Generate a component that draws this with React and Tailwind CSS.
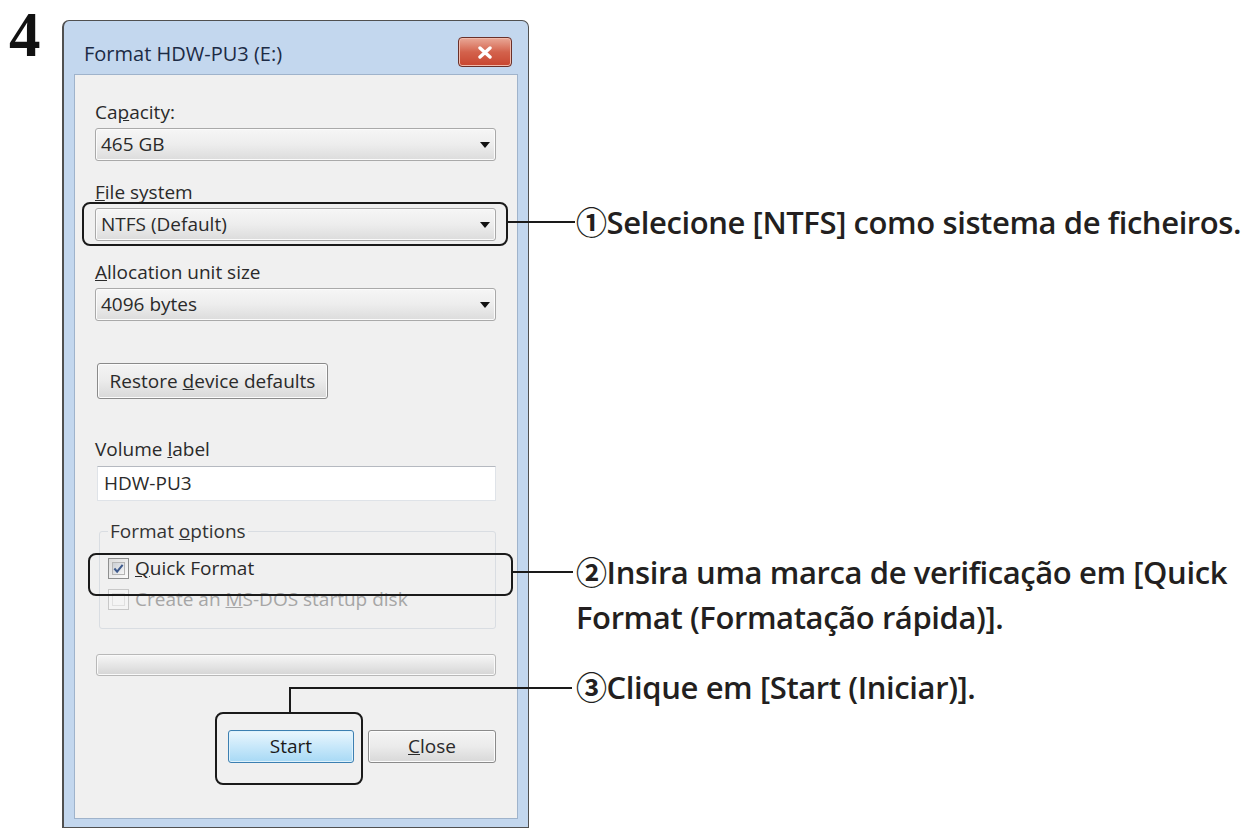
import React from "react";

const Arrow = () => (
  <svg width="10" height="6" viewBox="0 0 10 6">
    <path d="M0 0h10L5 6z" fill="#111" />
  </svg>
);

const Combo = ({ value }) => (
  <div className="h-[33px] w-[401px] flex items-center justify-between pl-[5px] pr-[5px] rounded-[3px] border border-[#a9a9a9] bg-linear-to-b from-[#f6f6f6] via-[#ededed] to-[#dcdcdc] shadow-[inset_0_0_0_1px_#fbfbfb]">
    <span>{value}</span>
    <Arrow />
  </div>
);

const Check = ({ checked, disabled }) => (
  <div
    className={
      "w-[21px] h-[21px] shrink-0 border p-[3px] " +
      (disabled
        ? "border-[#c8c8c8] bg-[#f4f4f4]"
        : "border-[#8e8f8f] bg-linear-to-br from-[#dcdcdc] to-[#fbfbfb]")
    }
  >
    <div
      className={
        "w-full h-full border flex items-center justify-center " +
        (disabled
          ? "border-[#e0e0e0] bg-[#f4f4f4]"
          : "border-[#b5b5b5] bg-linear-to-br from-[#cbcfd5] to-[#f6f6f6]")
      }
    >
      {checked && (
        <svg width="12" height="11" viewBox="0 0 12 11">
          <path d="M1.5 5.5L4.5 9L10.5 1.5" fill="none" stroke="#3e5a8c" strokeWidth="2.2" />
        </svg>
      )}
    </div>
  </div>
);

const Label = ({ children, className = "" }) => (
  <div className={"h-[20px] leading-[20px] " + className}>{children}</div>
);

const Dialog = () => (
  <div className="mt-[20px] w-[467px] h-[808px] flex flex-col rounded-t-[7px] border border-[#505050] border-l-2 bg-[#c3d7ee] font-['Open_Sans',sans-serif] text-[19px] text-[#2a2a2a]">
    {/* title bar */}
    <div className="h-[53px] flex justify-between pl-[20px] pr-[16px]">
      <div className="pt-[21px] text-[20px] leading-[24px] text-[#1c2b45]">Format HDW-PU3 (E:)</div>
      <div className="mt-[16px] w-[54px] h-[30px] rounded-[4px] border border-[#6a3029] bg-linear-to-b from-[#e9a897] via-[#d3624c] to-[#c8452f] shadow-[inset_0_0_0_1px_#f1b9aa] flex items-center justify-center">
        <svg width="16" height="13" viewBox="0 0 16 13">
          <path d="M3 2L13 11M13 2L3 11" stroke="#fff" strokeWidth="3.4" strokeLinecap="round" />
        </svg>
      </div>
    </div>
    {/* client area */}
    <div className="mx-[10px] mb-[8px] flex-1 flex flex-col border border-[#9fb3cb] bg-[#f0f0f0] pl-[20px] pr-[19px] pt-[27px]">
      <Label>
        Ca<span className="underline">p</span>acity:
      </Label>
      <div className="mt-[6px]">
        <Combo value="465 GB" />
      </div>
      <Label className="mt-[21px]">
        <span className="underline">F</span>ile system
      </Label>
      <div className="mt-[6px]">
        <Combo value="NTFS (Default)" />
      </div>
      <Label className="mt-[21px]">
        <span className="underline">A</span>llocation unit size
      </Label>
      <div className="mt-[6px]">
        <Combo value="4096 bytes" />
      </div>
      <div className="mt-[42px] w-[231px] h-[36px] ml-[2px] rounded-[3px] border border-[#8a8a8a] bg-linear-to-b from-[#f4f4f4] via-[#ebebeb] to-[#d8d8d8] shadow-[inset_0_0_0_1px_#fcfcfc] flex items-center justify-center">
        <span>
          Restore <span className="underline">d</span>evice defaults
        </span>
      </div>
      <Label className="mt-[40px]">
        Volume <span className="underline">l</span>abel
      </Label>
      <div className="mt-[7px] ml-[2px] w-[399px] h-[35px] flex items-center pl-[6px] bg-white border border-[#dfe3e8] border-t-[#b5b9c0]">
        HDW-PU3
      </div>
      <fieldset className="mt-[20px] ml-[4px] w-[397px] h-[108px] border border-[#d9dde2] rounded-[3px] pl-[8px] pt-[16px]">
        <legend className="px-[2px] leading-[20px] text-[#333]">
          Format <span className="underline">o</span>ptions
        </legend>
        <div className="flex items-center gap-[6px] h-[22px]">
          <Check checked />
          <span>
            <span className="underline">Q</span>uick Format
          </span>
        </div>
        <div className="mt-[9px] flex items-center gap-[6px] h-[22px] text-[#a6a6a6]">
          <Check disabled />
          <span>
            Create an <span className="underline">M</span>S-DOS startup disk
          </span>
        </div>
      </fieldset>
      <div className="mt-[25px] ml-[1px] w-[400px] h-[22px] rounded-[3px] border border-[#b8b8b8] bg-linear-to-b from-[#f6f6f6] via-[#e6e6e6] to-[#d5d5d5] shadow-[inset_0_0_0_1px_#fafafa]" />
      <div className="mt-[54px] flex justify-end gap-[14px] pr-[2px]">
        <div className="w-[126px] h-[33px] rounded-[3px] border border-[#3c7fb1] bg-linear-to-b from-[#eaf6fd] via-[#c8e8fa] to-[#a7d9f5] shadow-[inset_0_0_0_1px_#dff2fc] flex items-center justify-center text-[#1a1a1a]">
          Start
        </div>
        <div className="w-[128px] h-[33px] rounded-[3px] border border-[#8a8a8a] bg-linear-to-b from-[#f4f4f4] via-[#ebebeb] to-[#d8d8d8] shadow-[inset_0_0_0_1px_#fcfcfc] flex items-center justify-center">
          <span>
            <span className="underline">C</span>lose
          </span>
        </div>
      </div>
    </div>
  </div>
);

export default function App() {
  return (
    <div className="relative w-[1254px] h-[834px] overflow-hidden bg-white flex">
      <div className="w-[62px] pl-[9px] font-['Liberation_Serif',serif] font-bold text-[63px] leading-[70px] text-[#111]">
        4
      </div>
      <Dialog />
      <div className="flex-1 pl-[47px] flex flex-col font-['Open_Sans','Noto_Sans_CJK_JP',sans-serif] font-semibold text-[31px] leading-[45px] text-[#231f20] tracking-[-0.4px] whitespace-nowrap">
        <div className="mt-[200px]">①Selecione [NTFS] como sistema de ficheiros.</div>
        <div className="mt-[305px]">
          ②Insira uma marca de verificação em [Quick
          <br />
          Format (Formatação rápida)].
        </div>
        <div className="mt-[25px]">③Clique em [Start (Iniciar)].</div>
      </div>

      {/* callout frames and leader lines */}
      <div className="absolute left-[82px] top-[202px] w-[426px] h-[44px] rounded-[8px] border-[2.5px] border-[#1a1a1a]" />
      <div className="absolute left-[507px] top-[221px] w-[68px] h-[2px] bg-[#1a1a1a]" />
      <div className="absolute left-[88px] top-[553px] w-[425px] h-[43px] rounded-[8px] border-[2.5px] border-[#1a1a1a]" />
      <div className="absolute left-[512px] top-[571px] w-[61px] h-[2px] bg-[#1a1a1a]" />
      <div className="absolute left-[215px] top-[712px] w-[148px] h-[73px] rounded-[8px] border-[2.5px] border-[#1a1a1a]" />
      <div className="absolute left-[289px] top-[687px] w-[2px] h-[26px] bg-[#1a1a1a]" />
      <div className="absolute left-[289px] top-[687px] w-[283px] h-[2px] bg-[#1a1a1a]" />
    </div>
  );
}
